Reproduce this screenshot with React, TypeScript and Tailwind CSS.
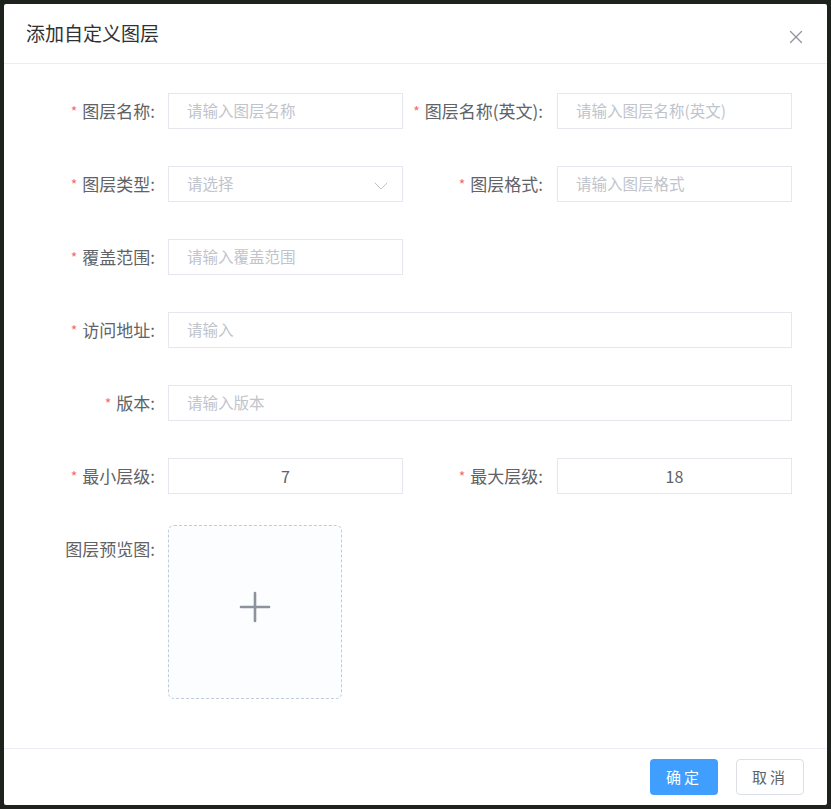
import { ChevronDown, Plus, X } from "lucide-react";

type FieldProps = {
  label: string;
  required?: boolean;
  placeholder?: string;
  value?: string;
  span?: boolean;
  select?: boolean;
};

const Label = ({ label, required, first }: { label: string; required?: boolean; first?: boolean }) => (
  <div
    className={`flex h-9 items-center justify-end text-[17px] text-[#606266] ${first ? "pr-[13px]" : "pr-[14px]"}`}
  >
    {required && <span className="mr-[5px] text-[14px] text-[#f56c6c]">*</span>}
    {label}
  </div>
);

const Input = ({ placeholder, value, span, select }: FieldProps) => (
  <div
    className={`relative flex h-9 items-center border border-[#e4e7ed] bg-white ${span ? "col-span-3" : ""}`}
  >
    {value ? (
      <span className="w-full text-center text-[16px] text-[#606266]">{value}</span>
    ) : (
      <span className="pl-[18px] text-[15.5px] text-[#c0c4cc]">{placeholder}</span>
    )}
    {select && (
      <ChevronDown className="absolute right-[9px] top-[7px] h-[24px] w-[24px] text-[#c0c4cc]" strokeWidth={1} />
    )}
  </div>
);

export default function App() {
  return (
    <div
      className="h-[809px] w-full bg-[#1d221c] p-[4px]"
      style={{ fontFamily: '"Noto Sans CJK SC", "Noto Sans", sans-serif' }}
    >
      <div className="flex h-full flex-col rounded-[2px] bg-white">
        <div className="flex h-[60px] items-center justify-between border-b border-[#ebeef5] pl-[22px] pr-[20px]">
          <span className="text-[19px] text-[#303133]">添加自定义图层</span>
          <X className="mt-[6px] h-[22px] w-[22px] text-[#909399]" strokeWidth={1.3} />
        </div>

        <div className="flex-1 pt-[29px]">
          <div className="grid grid-cols-[164px_235px_154px_235px] gap-y-[37px]">
            <Label first required label="图层名称:" />
            <Input placeholder="请输入图层名称" label="" />
            <Label required label="图层名称(英文):" />
            <Input placeholder="请输入图层名称(英文)" label="" />

            <Label first required label="图层类型:" />
            <Input placeholder="请选择" label="" select />
            <Label required label="图层格式:" />
            <Input placeholder="请输入图层格式" label="" />

            <Label first required label="覆盖范围:" />
            <Input placeholder="请输入覆盖范围" label="" />
            <div className="col-span-2" />

            <Label first required label="访问地址:" />
            <Input placeholder="请输入" label="" span />

            <Label first required label="版本:" />
            <Input placeholder="请输入版本" label="" span />

            <Label first required label="最小层级:" />
            <Input value="7" label="" />
            <Label required label="最大层级:" />
            <Input value="18" label="" />

            <Label first label="图层预览图:" />
            <div className="col-span-3">
              <div className="-mt-[6px] flex h-[174px] w-[174px] items-center justify-center rounded-[6px] border border-dashed border-[#c0ccda] bg-[#fbfdff]">
                <Plus className="mb-[11px] h-[48px] w-[48px] text-[#8c939d]" strokeWidth={1.3} />
              </div>
            </div>
          </div>
        </div>

        <div className="flex h-[57px] items-center justify-end gap-[18px] border-t border-[#ebeef5] pr-[23px]">
          <button className="h-9 w-[68px] rounded-[4px] bg-[#409eff] text-[15px] tracking-[3px] text-white">
            确定
          </button>
          <button className="h-9 w-[68px] rounded-[4px] border border-[#dcdfe6] bg-white text-[15px] tracking-[3px] text-[#606266]">
            取消
          </button>
        </div>
      </div>
    </div>
  );
}
